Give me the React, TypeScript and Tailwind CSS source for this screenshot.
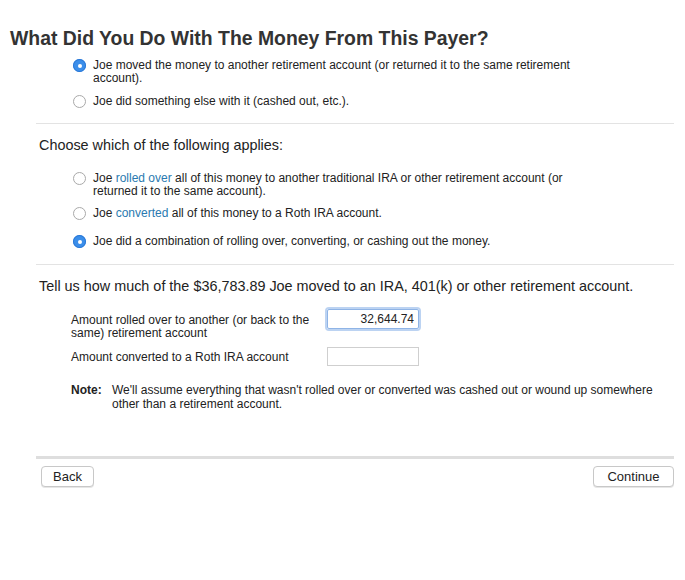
import React from "react";

function Radio({ checked }: { checked?: boolean }) {
  if (checked) {
    return (
      <span className="flex h-[13px] w-[13px] shrink-0 items-center justify-center rounded-full bg-[#3b8eea] shadow-[inset_0_0_0_1px_#2a78d6]">
        <span className="h-[4px] w-[4px] rounded-full bg-white" />
      </span>
    );
  }
  return (
    <span className="h-[13px] w-[13px] shrink-0 rounded-full border border-[#a9a9a9] bg-white" />
  );
}

function Option({
  checked,
  children,
}: {
  checked?: boolean;
  children: React.ReactNode;
}) {
  return (
    <div className="flex items-start gap-[7px]">
      <Radio checked={checked} />
      <div className="text-[12px] leading-[13px] text-[#222]">{children}</div>
    </div>
  );
}

export default function App() {
  return (
    <div
      className="h-[580px] w-[685px] bg-white text-[#222]"
      style={{ fontFamily: '"Liberation Sans", Arial, sans-serif' }}
    >
      <h1 className="pl-[10px] pt-[27px] text-[19.4px] font-bold leading-[22px] text-[#333]">
        What Did You Do With The Money From This Payer?
      </h1>

      <div className="flex flex-col gap-[10px] pl-[73px] pt-[10px]">
        <Option checked>
          Joe moved the money to another retirement account (or returned it to the same retirement
          <br />
          account).
        </Option>
        <Option>Joe did something else with it (cashed out, etc.).</Option>
      </div>

      <div className="ml-[36px] mr-[11px] mt-[15px] border-t border-[#e3e3e3]" />

      <div className="pl-[39px] pt-[13px] text-[14.4px] leading-[17px]">
        Choose which of the following applies:
      </div>

      <div className="flex flex-col gap-[9px] pl-[73px] pt-[18px]">
        <Option>
          Joe <span className="text-[#2a7ab0]">rolled over</span> all of this money to another traditional IRA or other retirement account (or
          <br />
          returned it to the same account).
        </Option>
        <Option>
          Joe <span className="text-[#2a7ab0]">converted</span> all of this money to a Roth IRA account.
        </Option>
        <div className="pt-[6px]">
          <Option checked>
            Joe did a combination of rolling over, converting, or cashing out the money.
          </Option>
        </div>
      </div>

      <div className="ml-[36px] mr-[11px] mt-[16px] border-t border-[#e3e3e3]" />

      <div className="pl-[39px] pt-[13px] text-[14.4px] leading-[17px]">
        Tell us how much of the $36,783.89 Joe moved to an IRA, 401(k) or other retirement account.
      </div>

      <div className="flex flex-col gap-[7px] pl-[71px] pt-[14px] text-[12px] leading-[13px]">
        <div className="flex items-start">
          <div className="w-[256px] pt-[5px]">
            Amount rolled over to another (or back to the
            <br />
            same) retirement account
          </div>
          <div className="flex h-[20px] w-[92px] items-center justify-end rounded-[2px] border border-[#8fb4e6] px-[4px] text-[12px] shadow-[0_0_0_2px_#bcd3f2]">
            32,644.74
          </div>
        </div>
        <div className="flex items-center">
          <div className="w-[256px] pt-[2px]">Amount converted to a Roth IRA account</div>
          <div className="h-[19px] w-[92px] border border-[#cfcfcf]" />
        </div>
      </div>

      <div className="flex pl-[71px] pt-[17px] text-[12px] leading-[14px]">
        <div className="w-[41px] font-bold">Note:</div>
        <div>
          We'll assume everything that wasn't rolled over or converted was cashed out or wound up somewhere
          <br />
          other than a retirement account.
        </div>
      </div>

      <div className="ml-[36px] mr-[11px] mt-[45px] h-[3px] bg-[#dedede]" />

      <div className="ml-[41px] mr-[11px] flex justify-between pt-[7px]">
        <button className="h-[21px] w-[53px] rounded-[4px] border border-[#c8c8c8] bg-white text-[13px] leading-[19px] shadow-[0_1px_0_#e6e6e6]">
          Back
        </button>
        <button className="h-[21px] w-[81px] rounded-[4px] border border-[#c8c8c8] bg-white text-[13px] leading-[19px] shadow-[0_1px_0_#e6e6e6]">
          Continue
        </button>
      </div>
    </div>
  );
}
